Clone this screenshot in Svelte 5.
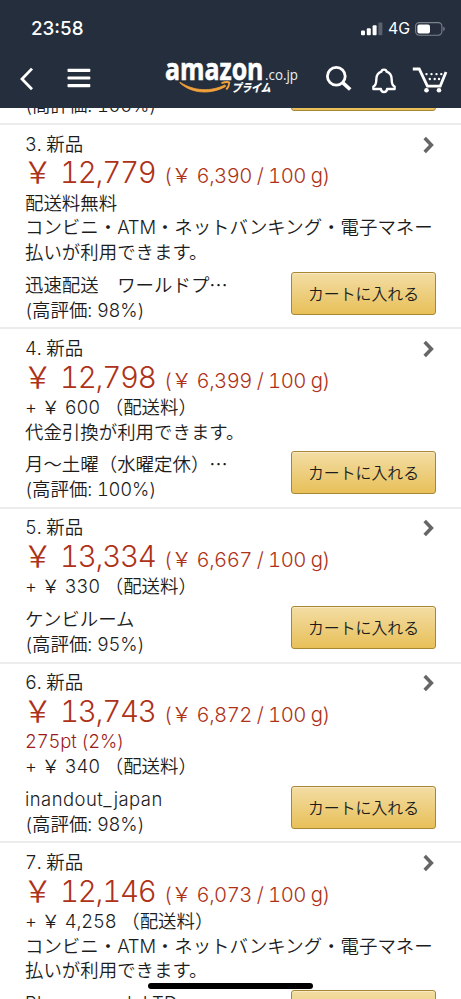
<script>
  const konbini = ['コンビニ・ATM・ネットバンキング・電子マネー', '払いが利用できます。'];
  const offers = [
    { no: 3, price: '12,779', unit: '6,390', lines: ['配送料無料', ...konbini], seller: '迅速配送　ワールドプ…', rate: 98 },
    { no: 4, price: '12,798', unit: '6,399', lines: ['+ ￥ 600 （配送料）', '代金引換が利用できます。'], seller: '月～土曜（水曜定休）…', rate: 100 },
    { no: 5, price: '13,334', unit: '6,667', lines: ['+ ￥ 330 （配送料）'], seller: 'ケンビルーム', rate: 95 },
    { no: 6, price: '13,743', unit: '6,872', points: '275pt (2%)', lines: ['+ ￥ 340 （配送料）'], seller: 'inandout_japan', rate: 98 },
    { no: 7, price: '12,146', unit: '6,073', lines: ['+ ￥ 4,258 （配送料）', ...konbini], seller: 'Pharmawork LTD', rate: 98 }
  ];
  // Latin runs have their own face and tracking.
  const runs = (s) => s.match(/[\x20-\x7e]+|[^\x20-\x7e]+/g) ?? [];
</script>

{#snippet mixed(s)}{#each runs(s) as r}<span class:latin={/^[\x20-\x7e]/.test(r)}>{r}</span>{/each}{/snippet}

<div class="screen">
  <header>
    <div class="status">
      <span class="time">23:58</span>
      <div class="signals">
        <svg width="22" height="14" viewBox="0 0 22 14" fill="#fff">
          <rect x="0" y="8.5" width="4" height="4.8" rx="1" />
          <rect x="5.8" y="6.2" width="4" height="7.1" rx="1" />
          <rect x="11.6" y="3.2" width="4" height="10.1" rx="1" />
          <rect x="17.4" y="0.5" width="4" height="12.8" rx="1" opacity=".25" />
        </svg>
        <span class="net">4G</span>
        <svg width="31" height="14" viewBox="0 0 31 14">
          <rect x=".6" y=".6" width="26.3" height="12.6" rx="3.6" fill="none" stroke="#7c828b" stroke-width="1.1" />
          <rect x="2.4" y="2.4" width="12.6" height="9" rx="2" fill="#fff" />
          <path d="M28.3 4.7c1.9.6 1.9 3.8 0 4.4z" fill="#7c828b" />
        </svg>
      </div>
    </div>
    <nav>
      <svg class="back" width="14" height="24" viewBox="0 0 14 24"><path d="M12 1.6 2 12l10 10.2" fill="none" stroke="#fff" stroke-width="2.8" /></svg>
      <svg class="menu" width="24" height="20" viewBox="0 0 24 20" fill="#fff">
        <rect x=".5" y=".8" width="22.8" height="3.2" rx=".8" /><rect x=".5" y="8.4" width="22.8" height="3.2" rx=".8" /><rect x=".5" y="16" width="22.8" height="3.2" rx=".8" />
      </svg>
      <svg class="logo" width="136" height="40" viewBox="0 0 136 40">
        <text x="0" y="21.5" class="brand" textLength="98.5" lengthAdjust="spacingAndGlyphs">amazon</text>
        <text x="100" y="21.5" class="tld" textLength="33" lengthAdjust="spacingAndGlyphs">.co.jp</text>
        <path d="M15 24.2c14 9.2 31 9.6 45 2.7l.7 1.5c-14.5 8.3-34 7.6-45.9-3.6z" fill="#f3a13a" stroke="#f3a13a" stroke-width=".8" />
        <path d="M56.5 25.2c4-1.5 6.5-1.5 7.8-.7-.1 2.5-1.3 5.2-3 7" fill="none" stroke="#f3a13a" stroke-width="1.9" stroke-linejoin="round" />
        <g transform="translate(66.5 34) skewX(-14)"><text class="prime" textLength="39" lengthAdjust="spacingAndGlyphs">プライム</text></g>
      </svg>
      <svg class="search" width="26" height="26" viewBox="0 0 26 26" fill="none" stroke="#fff"><circle cx="10.3" cy="10.3" r="8.9" stroke-width="2.8" /><path d="m16.7 16.7 7.5 6.8" stroke-width="3.7" /></svg>
      <svg class="bell" width="24" height="26" viewBox="0 0 26 28" fill="none" stroke="#fff" stroke-width="2.6" stroke-linejoin="round"><path d="M10.2 3.8C10.5.9 15.5.9 15.8 3.8c4 1.3 5.5 4.3 5.5 8.2 0 4.7.6 6.7 3.2 8v2.7h-8.2c-.5 4.2-6.1 4.2-6.6 0H1.5V20c2.6-1.3 3.2-3.3 3.2-8 0-3.9 1.5-6.9 5.5-8.2z" /></svg>
      <svg class="cart" width="36" height="26" viewBox="0 0 36 26" fill="#fff"><path d="M.8 2h6.4l8.2 17.2h12.8L34 5" fill="none" stroke="#fff" stroke-width="2.8" /><circle cx="14.5" cy="23.3" r="2.3" /><circle cx="27" cy="23.3" r="2.3" />
        {#each [[14.5, 7.1], [19.5, 7.1], [24.5, 7.1], [29.3, 7.1], [17.8, 12], [22.7, 12], [27, 12]] as [x, y]}<circle cx={x} cy={y} r="1.2" />{/each}
      </svg>
    </nav>
  </header>

  <main>
    <section class="offer cut">
      <div class="foot"><div class="seller"><p>{@render mixed('(高評価: 100%)')}</p></div><button>カートに入れる</button></div>
    </section>
    {#each offers as o}
      <section class="offer">
        <div class="head">
          <p>{@render mixed(`${o.no}. 新品`)}</p>
          <svg width="13" height="18" viewBox="0 0 13 18"><path d="m1.7 2 6.7 7-6.7 7" fill="none" stroke="#666" stroke-width="3.5" /></svg>
        </div>
        <p class="price">{@render mixed(`￥ ${o.price} `)}<small>{@render mixed(`(￥ ${o.unit} / 100 g)`)}</small></p>
        {#if o.points}<p class="points">{@render mixed(o.points)}</p>{/if}
        {#each o.lines as l}<p>{@render mixed(l)}</p>{/each}
        <div class="foot">
          <div class="seller"><p class="name">{@render mixed(o.seller)}</p><p>{@render mixed(`(高評価: ${o.rate}%)`)}</p></div>
          <button>カートに入れる</button>
        </div>
      </section>
    {/each}
  </main>
  <div class="home"></div>
</div>

<style>
  .screen {
    position: relative;
    width: 461px;
    height: 999px;
    overflow: hidden;
    display: flex;
    flex-direction: column;
    background: #fff;
    color: #1c1c1c;
    font: 350 18.45px/24.6px 'Noto Sans CJK JP', sans-serif;
  }
  header { flex: none; height: 108px; background: #252e3d; color: #fff; box-sizing: border-box; padding-top: 17px; }
  .status { display: flex; justify-content: space-between; align-items: center; height: 24px; padding: 0 15px 0 31px; }
  .time { font: 500 18.8px/24px Inter, sans-serif; }
  .signals { display: flex; align-items: center; }
  .net { font: 400 15.8px/22px Inter, sans-serif; margin: 0 5px; }
  nav { display: flex; align-items: flex-start; height: 56px; padding: 14px 0 0 20px; }
  nav svg { flex: none; overflow: visible; }
  .back { margin-top: 12px; }
  .menu { margin: 13px 0 0 33px; }
  .logo { margin: 3px 0 0 74px; }
  .search { margin: 11px 0 0 25px; }
  .bell { margin: 13px 0 0 20px; }
  .cart { margin: 12px 0 0 16px; }
  .brand { font: 700 29.5px 'Open Sans', sans-serif; fill: #fff; stroke: #fff; stroke-width: .6; }
  .tld { font: 400 15px 'Open Sans', sans-serif; fill: #eee; }
  .prime { font: 900 11.5px 'Noto Sans CJK JP', sans-serif; fill: #fff; }
  main { flex: 1; min-height: 0; overflow: hidden; }
  p { margin: 0; height: 24.6px; white-space: pre; }
  .offer { padding: 5.8px 25px 6px; border-bottom: 2px solid #ececec; }
  .cut { padding-top: 0; margin-top: -48.6px; }
  .cut .seller { padding-top: 24.6px; }
  .head, .foot { display: flex; justify-content: space-between; }
  .head svg { margin: 5px 0 0; }
  .latin { font-family: Inter, sans-serif; font-weight: 300; letter-spacing: -.01em; font-variant-numeric: tabular-nums; }
  .name .latin { letter-spacing: .025em; }
  .price { height: 34.4px; line-height: 30px; font-size: 29.4px; color: #ad3218; }
  .price > .latin { letter-spacing: -.043em; }
  .price > span:first-child { margin: 0 1px 0 -2px; }
  .price small { margin-left: 2px; font-size: 20.3px; }
  .price small .latin { letter-spacing: -.027em; }
  .points { color: #9b1c1c; }
  .foot { margin-top: 8.4px; align-items: flex-start; }
  button {
    flex: none;
    width: 145px; height: 43px; margin: 0; padding: 0; border: 1.5px solid #a88734; border-radius: 3px;
    background: linear-gradient(#f3dda4, #e8c059); box-shadow: inset 0 1px 0 #f8e9c4;
    font: 350 15.9px/39px 'Noto Sans CJK JP', sans-serif; color: #1c1c1c;
  }
  .home { position: absolute; left: 148px; top: 983px; width: 165px; height: 6px; border-radius: 3px; background: #000; }
</style>
